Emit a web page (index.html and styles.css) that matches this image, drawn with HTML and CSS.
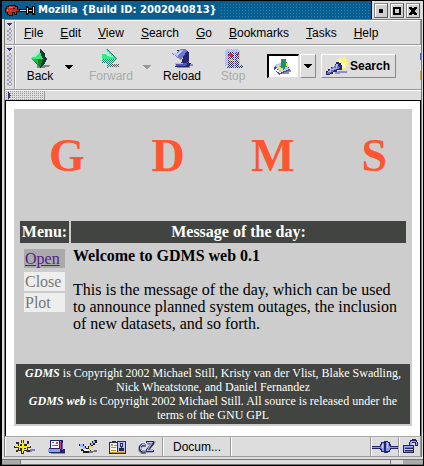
FILE: index.html
```html
<!DOCTYPE html>
<html lang="en">
<head>
<meta charset="utf-8">
<title>Mozilla {Build ID: 2002040813}</title>
<link rel="stylesheet" href="styles.css">
</head>
<body>
<div class="window">
  <header class="titlebar">
    <svg class="pin" width="30" height="13" viewBox="0 0 30 13" aria-hidden="true" shape-rendering="crispEdges">
      <path fill="#16110f" d="M1 2h2V1h8v1h2v3h2v3h-3v3H9V9H8v3H4v-1H2V9H0V4h1z"/>
      <path fill="#c52d20" d="M2 3h2V2h6v1h2v3h2v1h-3v3h-1V8H7v3H4v-1H3V8H1V5h1z"/>
      <path fill="#f06a4c" d="M4 3h4v1H4zM2 5h1v2H2zM5 6h1v1H5z"/><path fill="#111" d="M8 4h2v1H8z"/>
      <path fill="#080808" d="M14 5h7V2h2v1h1v1h3V2h3v9h-3V9h-3v1h-1v1h-2V8h-7z"/>
      <path fill="#ddd" d="M15 6h6v1h-6zM22 4h1v5h-1zM24 6h3v1h-3zM28 3h1v6h-1z"/>
    </svg>
    <h1 class="title">Mozilla {Build ID: 2002040813}</h1>
    <span class="weave"></span>
    <div class="controls">
      <button class="control" aria-label="Minimize"><svg width="12" height="12" viewBox="0 0 12 12"><path d="M4 4h4v4H4z"/></svg></button>
      <button class="control" aria-label="Maximize"><svg width="12" height="12" viewBox="0 0 12 12"><path fill-rule="evenodd" d="M2 2h8v8H2zM4 4v4h4V4z"/></svg></button>
      <button class="control" aria-label="Close"><svg width="12" height="12" viewBox="0 0 12 12" shape-rendering="crispEdges"><path d="M2 2h3v1h2V2h3v2H9v1H8v2h1v1h1v2H7V9H5v1H2V8h1V7h1V5H3V4H2z"/></svg></button>
    </div>
  </header>
  <div class="frame">
    <div class="bar menubar">
      <span class="grip"></span>
      <nav class="menus">
        <a href="#"><u>F</u>ile</a><a href="#"><u>E</u>dit</a><a href="#"><u>V</u>iew</a><a href="#"><u>S</u>earch</a><a href="#"><u>G</u>o</a><a href="#"><u>B</u>ookmarks</a><a href="#"><u>T</u>asks</a><a href="#"><u>H</u>elp</a>
      </nav>
    </div>
    <div class="bar toolbar">
      <span class="grip"></span>
      <div class="tools">
        <button class="tool back">
          <svg width="24" height="21" viewBox="0 0 24 21" shape-rendering="crispEdges"><path fill="#858585" d="M9 17h13v1h-1v1h-4v1H9z"/><path fill="#123c36" d="M12 1l5 5v2l2 3-3 6-4 3z"/><path fill="#39e978" d="M12 1v11L3 11z"/><path fill="#8df8d0" d="M12 1v4L7 9H5z"/><path fill="#098b20" d="M3 11h12l-3 9z"/><path fill="#14bd35" d="M3 11h7v5z"/><path fill="#43d67e" d="M12 4l3 7h-3z"/></svg>
          <span>Back</span>
        </button>
        <button class="drop" aria-label="Back history"><svg width="8" height="5" viewBox="0 0 8 5" shape-rendering="crispEdges"><path d="M0 0h8v1H7v1H6v1H5v1H3V3H2V2H1V1H0z"/></svg></button>
        <button class="tool forward" disabled>
          <svg width="24" height="21" viewBox="0 0 24 21" shape-rendering="crispEdges"><defs><pattern id="mesh" width="2" height="2" patternUnits="userSpaceOnUse"><path fill="#ddd" d="M0 0h1v1H0zM1 1h1v1H1z"/></pattern></defs><path fill="#555" d="M9 16h12v1h-1v2H9z"/><path fill="#1c8074" d="M8 1l10 10-10 9v-5H3V6h5z"/><path fill="#2cf07b" d="M7 1l11 10H3V6h4z"/><path fill="url(#mesh)" d="M2 11h20v9H2z"/><path fill="#a2f8d7" d="M7 2h1v2h2v2h2v2h2v1h-4V8H8V7H7z"/></svg>
          <span>Forward</span>
        </button>
        <button class="drop off" aria-label="Forward history" disabled><svg width="8" height="5" viewBox="0 0 8 5" shape-rendering="crispEdges"><path d="M0 0h8v1H7v1H6v1H5v1H3V3H2V2H1V1H0z"/></svg></button>
        <button class="tool reload">
          <svg width="24" height="21" viewBox="0 0 24 21" shape-rendering="crispEdges"><path fill="#8d8d99" d="M5 16h18v2h-3v2H7z"/><path fill="#25266b" d="M6 2h10l3 3v10h2l-2 4H5v-4h6l2-5V7z"/><path fill="#7177d1" d="M10 1h5l2 2-6 9L1 5h6z"/><path fill="#bbc5ff" d="M2 5h5l4-3h3l-5 4-1 3z"/><path fill="#4d56b8" d="M6 15h10l3-2-3 5H6z"/><path fill="#aab6ff" d="M5 15h8v1H5zM5 16h1v2H5z"/></svg>
          <span>Reload</span>
        </button>
        <button class="tool stop" disabled>
          <svg width="24" height="21" viewBox="0 0 24 21" shape-rendering="crispEdges"><path fill="#303348" d="M13 17h9v3H5v-1z"/><path fill="#9aa6ed" d="M4 2h2V1h11v1h2v17H6v-1H4z"/><path fill="#292d57" d="M7 4h6v15H7zM14 4h4v15h-4z"/><path fill="#c98b4a" d="M8 11h4v2H8zM16 11h2v2h-2z"/><path fill="url(#mesh)" d="M2 0h21v21H2z"/><path fill="#ef222d" d="M8 5h3v1h1v2h-1v1H9V8H8zM16 5h2v2h-2z"/><path fill="#bc2d8c" d="M7 7h1v2H7z"/></svg>
          <span>Stop</span>
        </button>
        <div class="location">
          <svg width="20" height="19" viewBox="0 0 20 19" shape-rendering="crispEdges"><path fill="#8c8ca4" d="M13 12h5v2h-2v2H8z"/><path fill="#484e8e" d="M2 7l11-4 4 9-11 5-5-5z"/><path fill="#b8c1ff" d="M2 7l10-4 4 8-9 4z"/><path fill="#f6ed16" d="M4 7h2v2h2v2h2v3H8v-2H6v-2H4zM13 5h2v4h-2z"/><path fill="#fff" d="M3 10h1v2h2v2h2v1H6v-1H4v-1H2v-2h1z"/><path fill="#229163" d="M8 1h5v7h1v1h-2v2h-1v1h-1v-2H8V9H7V8h1z"/></svg>
        </div>
        <button class="drop boxed" aria-label="Show locations"><svg width="8" height="5" viewBox="0 0 8 5" shape-rendering="crispEdges"><path d="M0 0h8v1H7v1H6v1H5v1H3V3H2V2H1V1H0z"/></svg></button>
        <button class="search">
          <svg width="24" height="20" viewBox="0 0 24 20" shape-rendering="crispEdges"><path fill="#fff66d" d="M12 3h2V1h2v2h2V1h2v2h2v3h1v4h-2v3h-8z"/><path fill="#fffbd0" d="M14 4h3v3h3v4h-4V7h-2z"/><path fill="#8a91cc" d="M10 16h3v-1h9v2h-7v1h-5z"/><path fill="#27295f" d="M1 15h2v-2h3v-2h4V8h1V6h3v1h2v2h1v5h-5v2H8v2H5v1H1z"/><path fill="#6970c6" d="M3 15l9-7 3 4-5 2-6 4H2z"/><path fill="#afbaff" d="M3 15h2v-2h3v-1h3V8h2v2h-1v3H9v1H6v2H3z"/></svg>
          <span>Search</span>
        </button>
        <button class="tool print">
          <svg width="24" height="21" viewBox="0 0 24 21" shape-rendering="crispEdges"><path fill="#4e56b8" d="M0 5h20v7H0z"/><path fill="#aab6ff" d="M1 6h18v4H1z"/></svg>
          <span>Print</span>
        </button>
      </div>
    </div>
    <div class="collapsed"><button class="tab" aria-label="Show personal toolbar"></button></div>
    <main class="page">
      <div class="sheet">
        <div class="brand"><span>G</span><span>D</span><span>M</span><span>S</span></div>
        <div class="columns">
          <h2 class="heading">Menu:</h2>
          <h2 class="heading">Message of the day:</h2>
          <nav class="links">
            <a class="open" href="#">Open</a>
            <span class="closed">Close</span>
            <span class="closed">Plot</span>
          </nav>
          <article class="message">
            <h3>Welcome to GDMS web 0.1</h3>
            <p>This is the message of the day, which can be used to announce planned system outages, the inclusion of new datasets, and so forth.</p>
          </article>
        </div>
        <footer class="legal">
          <p><b>GDMS</b> is Copyright 2002 Michael Still, Kristy van der Vlist, Blake Swadling, Nick Wheatstone, and Daniel Fernandez</p>
          <p><b>GDMS web</b> is Copyright 2002 Michael Still. All source is released under the terms of the GNU GPL</p>
        </footer>
      </div>
    </main>
    <div class="statusbar">
      <div class="apps">
        <button aria-label="Navigator"><svg width="22" height="16" viewBox="0 0 22 16" shape-rendering="crispEdges"><path fill="#7c81c5" d="M12 11h4v-1h5v2h-3v1h-6z"/><path fill="#302d28" d="M7 1h3v3h3V2h2v3h-1v2h3v2h-3v2h2v2h-3v-1h-3v3H7v-3H4v1H2v-2h2V9H0V7h4V5H2V3h3v1h2z"/><path fill="#ffe51b" d="M8 1h1v3h4v1h-3v2h3V5h1v2h2v1h-3v3h-3v1H9v2H8v-3H5V8H1V7h4V4h3zM6 5v2h2V5zm0 4v2h2V9zm4 0v1h2V9z"/></svg></button>
        <button aria-label="Mail"><svg width="20" height="16" viewBox="0 0 20 16" shape-rendering="crispEdges"><path fill="#8e8ea2" d="M4 13h14v2H4z"/><path fill="#232562" d="M3 1h13v9h2v4H2V9h1z"/><path fill="#929df8" d="M1 10h12v3H1z"/><path fill="#f5f7ff" d="M4 2h8v7H4z"/><path fill="#d64b6c" d="M9 3h2v2H9zM13 2h1v8h-1z"/><path fill="#5c67df" d="M5 3h2v1H5zM5 6h6v1H5zM15 4h1v7h-1z"/></svg></button>
        <button aria-label="Composer"><svg width="20" height="16" viewBox="0 0 20 16" shape-rendering="crispEdges"><path fill="#777" d="M7 12h9v-1h3v2h-4v1H7z"/><path fill="#17182c" d="M1 5h5v2h2v2h2V7h2V4h2V2h2V1h3v3h-2v2h-2v3h-2v3h-2v2H5v-2H3v-2h2V8H2V7H1z"/><path fill="#aab4ff" d="M2 5h3v2h2v2h1v1H5V8H2zM15 2h2v2h-2v2h-2v2h-2V6h2V4h2z"/><path fill="#fff" d="M5 10h6V8h3v2h-2v2H6z"/><path fill="#f5d64c" d="M12 7h3v2h-2v2h-2V9h1z"/></svg></button>
        <button aria-label="Address book"><svg width="18" height="16" viewBox="0 0 18 16" shape-rendering="crispEdges"><path fill="#252861" d="M0 3h3V2h4v1h1V2h9v13H0z"/><path fill="#f5f4e8" d="M1 4h7v9H1z"/><path fill="#b6c2ff" d="M9 3h7v10H9z"/><path fill="#c29416" d="M2 5h2v2H2zM5 6h3v1H5zM2 8h5v1H2zM2 11h5v1H2zM1 13h15v1H1z"/><path fill="#26264a" d="M11 4h3v4h-1v1h2v3h-5V9h2V8h-1z"/><path fill="#f3d5cf" d="M12 5h1v2h-1z"/></svg></button>
        <button aria-label="ChatZilla"><svg width="18" height="16" viewBox="0 0 18 16"><path fill="none" stroke="#777" stroke-width="3" d="M8 6.500H4L2 8.500v3l2 2h4M9 4h6L9 12h6"/><path fill="none" stroke="#27284f" stroke-width="2" d="M7 5.500H4l-2 2v3l2 2h3M8 3h7v2L9 11v1h7"/><path fill="none" stroke="#b8c3ff" d="M7 5.500H4l-1.500 2v3l1.500 1.500h3M9 3.500h5.500L9 11.500h6"/></svg></button>
      </div>
      <span class="status">Docum...</span>
      <span class="progress"></span>
      <span class="online"><svg width="26" height="14" viewBox="0 0 26 14" shape-rendering="crispEdges"><path fill="#242765" d="M0 6h8V4h1V2h3V1h4v1h2v2h1v2h7v3h-7v1h-1v2h-2v1h-4v-1H9v-2H8V9H0z"/><path fill="#8a95f4" d="M0 7h9V5h1V3h2v8h-2V9H9V8H0zM14 2h2v1h1v3h1v1h8v1h-8v2h-1v1h-3z"/><path fill="#cbd4ff" d="M10 4h1v4h-1zM15 3h1v5h-1z"/></svg></span>
      <span class="lock"><svg width="16" height="15" viewBox="0 0 16 15" shape-rendering="crispEdges"><path fill="#252759" d="M7 6V3h1V1h2V0h4v1h1v2h1v4h-3V4h-3v2h2v8H1V6z"/><path fill="#9ca8ff" d="M8 5V3h1V2h5v1h1v3h-1V3h-4v3H8zM2 7h9v1H2zM2 7h1v6H2z"/><path fill="#e94c77" d="M3 8h8v1H3zM3 12h8v1H3z"/><path fill="#efdb4d" d="M3 10h8v1H3z"/></svg></span>
    </div>
  </div>
  <div class="resize"></div>
</div>
</body>
</html>
```
FILE: styles.css
```css
* { box-sizing: border-box; }
body, h1, h2, h3, p { margin: 0; }
body { font: 12px/14px "Liberation Sans", Arial, sans-serif; color: #000; background: #000; }
button { margin: 0; padding: 0; border: 0; background: none; font: inherit; color: inherit; }
svg { display: block; flex: none; }
a { color: inherit; text-decoration: none; }

.window { min-height: 100vh; display: flex; flex-direction: column; border: solid #000; border-width: 1px 1px 1px 2px; background: #ddd; overflow: hidden; }
.titlebar { display: flex; align-items: center; height: 18px; background: #085d91; }
.pin { margin: 0 3px 0 3px; }
.title { font: bold 10px/18px "DejaVu Sans", sans-serif; color: #fff; white-space: nowrap; }
.weave { flex: 1; align-self: stretch; margin: 3px 2px 2px 4px; background-image: linear-gradient(90deg, transparent 1px, #085d91 1px), linear-gradient(#2182b4 1px, transparent 1px); background-size: 3px 3px; }
.controls { display: flex; gap: 2px; align-self: stretch; padding: 2px 3px 1px 2px; background: #ddd; border-left: 1px solid #000; }
.control { width: 14px; height: 15px; display: grid; place-items: center; background: #d0d0d0; border: 1px solid; border-color: #888 #555 #555 #888; box-shadow: inset 1px 1px #fff; }

.frame { flex: 1; display: flex; flex-direction: column; margin: 0 1px 0 2px; border: solid #777; border-width: 1px 1px 0 1px; }
.bar { display: flex; border-bottom: 1px solid #999; border-top: 1px solid #fff; }
.menubar { height: 25px; border-right: 1px solid #999; }
.toolbar { height: 45px; }
.grip { flex: none; width: 10px; border-right: 1px solid #999; padding: 2px 1px; background: linear-gradient(#333477, #333477) 2px 2px / 5px 1px no-repeat, linear-gradient(#333477, #333477) 3px 3px / 3px 1px no-repeat, linear-gradient(#333477, #333477) 4px 4px / 1px 1px no-repeat; }
.grip::before { content: ""; display: block; height: calc(100% - 6px); margin: 5px 1px 0; background: conic-gradient(transparent 75%, #8586ad 0) 0 0 / 4px 4px, conic-gradient(#8586ad 0 0) 0 0 / 0 0; background: conic-gradient(#7576a3 25%, transparent 0 50%, #7576a3 0 75%, transparent 0) 0 0 / 4px 4px; opacity: .6; }
.menus { flex: 1; display: flex; align-items: center; gap: 17px; padding-left: 8px; border-left: 1px solid #fff; }

.tools { flex: 1; min-width: 0; display: flex; overflow: hidden; border-left: 1px solid #fff; padding: 2px 0 2px 8px; }
.tool { flex: none; display: flex; flex-direction: column; align-items: center; }
.tool:disabled { color: #aaa; }
.back { width: 32px; }
.drop { flex: none; display: grid; justify-items: center; width: 16px; padding-top: 17px; margin: 0 9px 0 5px; }
.drop.off { fill: #999; margin: 0 7px 0 3px; }
.forward { width: 50px; }
.reload { width: 40px; }
.stop { width: 30px; margin-left: 16px; }
.location { flex: none; width: 32px; height: 24px; margin: 6px 1px 0 19px; padding: 2px 4px; background: #fff; border: solid #000; border-width: 2px 1px 1px 2px; border-right-color: #ddd; border-bottom-color: #ddd; }
.drop.boxed, .search { height: 24px; margin: 6px 5px 0 0; padding: 0; border: 1px solid; border-color: #fff #888 #888 #fff; }
.drop.boxed { place-items: center; }
.search { flex: none; display: flex; align-items: center; gap: 1px; width: 75px; padding-left: 3px; font-weight: bold; }
.print { width: 34px; margin-left: 14px; }

.collapsed { height: 10px; display: flex; border-top: 1px solid #fff; }
.tab { width: 40px; border-right: 1px solid #999; background: linear-gradient(#333477, #333477) 3px 1px / 1px 7px no-repeat, linear-gradient(#333477, #333477) 4px 2px / 1px 5px no-repeat, linear-gradient(#333477, #333477) 5px 4px / 1px 1px no-repeat, conic-gradient(transparent 75%, #9697b5 0) 9px 0 / 2px 2px; }

.page { flex: 1; padding: 8px; background: #fff; border: solid #000; border-width: 1px 1px 0 1px; font: 16px/17px "Liberation Serif", "Times New Roman", serif; }
.sheet { background: #cdcdcd; padding: 0 2px 2px; }
.brand { display: flex; justify-content: space-between; height: 112px; padding: 20px 23px 0 33px; font-size: 46px; line-height: 53px; font-weight: bold; color: #ff5530; }
.columns { display: grid; grid-template-columns: 49px 1fr; gap: 0 2px; padding: 0 4px; }
.heading { font: inherit; font-weight: bold; line-height: 22px; color: #fff; background: #414440; text-align: center; white-space: nowrap; }
.links { display: grid; align-content: start; gap: 2px; padding: 6px 4px 0; }
.links > * { line-height: 19px; padding-left: 1px; }
.open { color: #551a8b; background: #aaa; text-decoration: underline; margin-bottom: 2px; }
.closed { color: #777; background: #eee; }
.message { padding: 4px 2px 0; }
.message h3 { font: inherit; font-weight: bold; margin-bottom: 17px; }
.legal { margin-top: 32px; padding: 2px 2px; font-size: 12px; line-height: 14px; color: #fff; background: #414440; text-align: center; }
.legal b { font-style: italic; }

.statusbar { display: flex; height: 21px; border-top: 1px solid #aaa; border-bottom: 1px solid #999; }
.statusbar > * { display: flex; align-items: center; border-right: 1px solid #999; border-left: 1px solid #fff; }
.apps { gap: 11px; padding: 0 6px 0 8px; }
.status { padding: 0 9px; }
.progress { flex: 1; }
.online { width: 28px; }
.lock { width: 22px; padding-left: 2px; }
.resize { height: 6px; margin-top: 2px; border: solid #777; border-width: 1px 0; background: linear-gradient(90deg, #aaa 18px, #777 18px 19px, transparent 19px calc(100% - 33px), #777 calc(100% - 33px) calc(100% - 32px), transparent calc(100% - 32px) calc(100% - 20px), #aaa calc(100% - 20px)); }
```
